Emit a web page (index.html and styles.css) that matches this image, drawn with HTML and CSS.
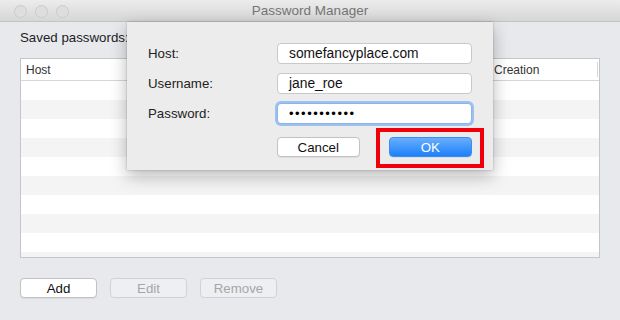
FILE: index.html
```html
<!DOCTYPE html>
<html lang="en">
<head>
    <meta charset="UTF-8">
    <title>Password Manager</title>
    <link rel="stylesheet" href="styles.css">
</head>
<body>
    <div class="window">
        <div class="titlebar">
            <div class="lights">
                <span class="light"></span>
                <span class="light"></span>
                <span class="light"></span>
            </div>
            <div class="title">Password Manager</div>
        </div>

        <div class="content">
            <div class="caption">Saved passwords:</div>
            <div class="table">
                <div class="thead">
                    <span class="col-host">Host</span>
                    <span class="col-creation">Creation</span>
                </div>
                <div class="row"></div>
                <div class="row alt"></div>
                <div class="row"></div>
                <div class="row alt"></div>
                <div class="row"></div>
                <div class="row alt"></div>
                <div class="row"></div>
                <div class="row alt"></div>
                <div class="row"></div>
                <div class="row alt"></div>
            </div>
            <div class="actions">
                <button class="btn">Add</button>
                <button class="btn" disabled>Edit</button>
                <button class="btn" disabled>Remove</button>
            </div>
        </div>

        <!-- sheet dialog over the window -->
        <div class="sheet">
            <div class="form">
                <label>Host:</label>
                <div class="field">somefancyplace.com</div>
                <label>Username:</label>
                <div class="field">jane_roe</div>
                <label>Password:</label>
                <div class="field focus"><span class="dots">•••••••••••</span></div>
            </div>
            <div class="sheet-buttons">
                <button class="btn wide">Cancel</button>
                <button class="btn wide primary">OK</button>
            </div>
            <div class="highlight"></div>
        </div>
    </div>
</body>
</html>
```

FILE: styles.css
```css
body {
    margin: 0;
    font-family: 'Liberation Sans', Arial, sans-serif;
    font-size: 13.3px;
    color: #222;
}
.window {
    position: relative;
    width: 620px;
    height: 320px;
    background: #e8e9ed;
    overflow: hidden;
}
.titlebar {
    position: relative;
    height: 22px;
    background: linear-gradient(#ececec, #d6d6d6);
    border-bottom: 1px solid #c4c4c4;
    box-sizing: border-box;
    display: flex;
    align-items: center;
    justify-content: center;
}
.lights {
    position: absolute;
    left: 14px;
    top: 5px;
    display: flex;
    gap: 8px;
}
.light {
    width: 11px;
    height: 11px;
    border-radius: 50%;
    border: 1px solid #cbcbcb;
    background: #dedede;
}
.title {
    color: #757575;
    font-size: 13.5px;
}
.content {
    padding: 8px 20px 0 20px;
}
.caption {
    height: 16px;
    line-height: 16px;
    margin-bottom: 12px;
}
.table {
    height: 198px;
    background: #fff;
    border: 1px solid #c6c6c6;
    overflow: hidden;
}
.thead {
    height: 21px;
    border-bottom: 1px solid #d6d6d6;
    display: flex;
    align-items: center;
    font-size: 12px;
    color: #333;
    position: relative;
}
.thead::after {
    content: "";
    position: absolute;
    right: 1px;
    top: 3px;
    bottom: 3px;
    border-right: 1px solid #d6d6d6;
}
.col-host {
    padding-left: 5px;
    flex: 1;
}
.col-creation {
    width: 105px;
}
.row {
    height: 19px;
}
.row.alt {
    background: #f4f4f5;
}
.actions {
    display: flex;
    gap: 13px;
    margin-top: 20px;
}
.btn {
    font-family: inherit;
    font-size: 13.3px;
    width: 77px;
    height: 20px;
    padding: 0;
    background: #fff;
    color: #111;
    border: 1px solid #c2c2c2;
    border-radius: 4px;
    box-shadow: 0 1px 0 rgba(0,0,0,0.06);
}
.btn:disabled {
    background: #eeeff2;
    color: #a6a6a6;
    border-color: #d2d2d4;
    box-shadow: none;
}
.sheet {
    position: absolute;
    left: 127px;
    top: 22px;
    width: 366px;
    height: 148px;
    box-sizing: border-box;
    padding: 21px 21px 0 21px;
    background: #ececec;
    box-shadow: 0 6px 16px rgba(0,0,0,0.28), 0 0 2px rgba(0,0,0,0.25);
}
.form {
    display: grid;
    grid-template-columns: 129px 195px;
    row-gap: 9px;
    align-items: center;
}
.field {
    height: 21px;
    box-sizing: border-box;
    padding-left: 11px;
    line-height: 19px;
    font-size: 13.8px;
    background: #fff;
    border: 1px solid #c9c9c9;
    border-radius: 4px;
    color: #111;
}
.field.focus {
    border-color: #8ab4ea;
    box-shadow: 0 0 0 2px #9cc1f1;
}
.dots {
    font-size: 13px;
    letter-spacing: 1.5px;
    color: #000;
}
.sheet-buttons {
    display: flex;
    gap: 29px;
    margin-top: 13px;
    padding-left: 129px;
}
.btn.wide {
    width: 83px;
}
.btn.primary {
    width: 84px;
    color: #fff;
    border-color: #3b8df5;
    background: linear-gradient(#69aefb, #1c80fb);
}
.highlight {
    position: absolute;
    left: 249px;
    top: 106px;
    width: 108px;
    height: 40px;
    box-sizing: border-box;
    border: 4px solid #f0000a;
}
```
